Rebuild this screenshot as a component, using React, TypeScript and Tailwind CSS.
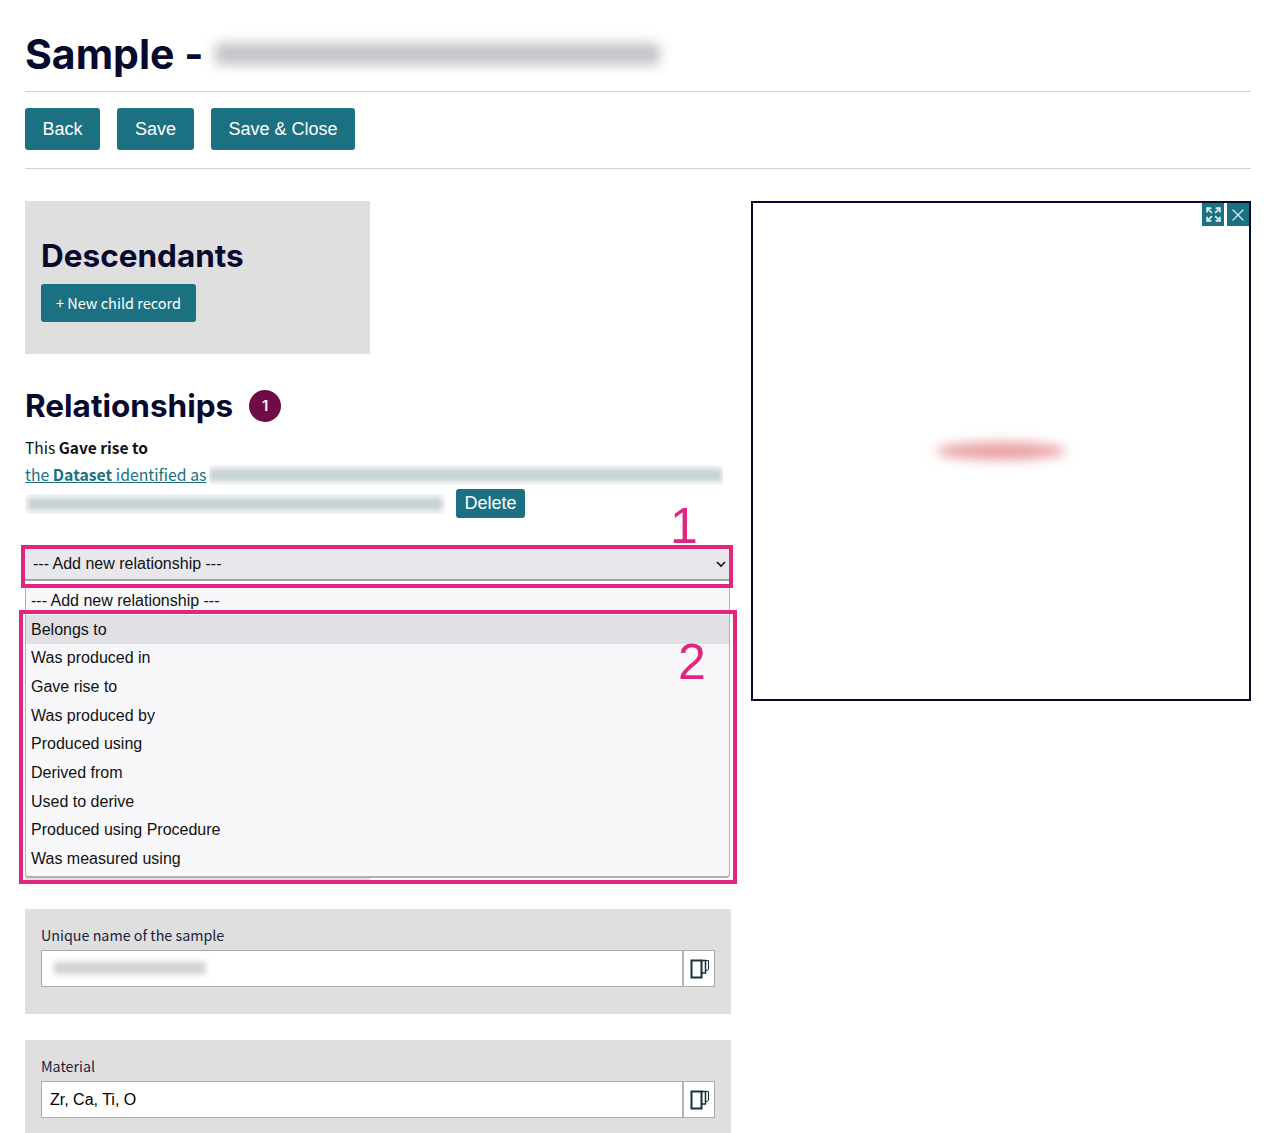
import React from 'react';
import { Expand, X } from 'lucide-react';

const options = [
  'Belongs to',
  'Was produced in',
  'Gave rise to',
  'Was produced by',
  'Produced using',
  'Derived from',
  'Used to derive',
  'Produced using Procedure',
  'Was measured using',
];

const heading = "font-['Inter','Lato',sans-serif] font-bold text-[#070a2e]";
const body = "font-['Noto_Sans_CJK_SC','Noto_Sans',sans-serif]";
const control = "font-['Liberation_Sans',Arial,sans-serif]";
const tealButton = `${control} bg-[#1b7182] text-white rounded-[3px] flex items-center justify-center`;

// ================= Blurred placeholder =================
const Blurred: React.FC<{ className: string; bar: string }> = ({ className, bar }) => (
  <div className={`overflow-hidden bg-white ${className}`}>
    <div className={bar} />
  </div>
);

const CopyIcon = () => (
  <svg className="ml-[2px]" width="20" height="20" viewBox="0 0 20 20" fill="none" stroke="#17303a" strokeWidth="2">
    <rect x="1.5" y="1.5" width="10" height="17" />
    <path d="M11.5 1.5h4v12.5h-4" strokeWidth="1.5" />
    <path d="M15.5 1.5h3v9l-3 1.5" strokeWidth="1" />
  </svg>
);

// ================= Field =================
const Field: React.FC<{ label: string; children: React.ReactNode; className: string }> = ({ label, children, className }) => (
  <div className={`w-[706px] bg-[#dfdfdf] px-4 pt-[17px] ${className}`}>
    <div className={`${body} text-[14.3px] leading-[18px] text-[#1a2340]`}>{label}</div>
    <div className="mt-[6px] flex h-[37px] w-[674px] border border-[#ababab] bg-white">
      <div className={`${control} flex-1 flex items-center relative text-[16px] text-black pl-2`}>{children}</div>
      <div className="w-[32px] border-l-2 border-[#b5b5b5] flex items-center justify-center">
        <CopyIcon />
      </div>
    </div>
  </div>
);

export default function App() {
  return (
    <div className="relative h-[1133px] overflow-hidden bg-white px-[25px]">
      {/* ================= Title ================= */}
      <div className="flex h-[91px] items-start pt-[29px]">
        <h1 className={`${heading} text-[41px] leading-[50px] whitespace-nowrap`}>Sample -</h1>
        <Blurred
          className="relative mt-[1px] h-[47px] w-[470px]"
          bar="absolute left-[12px] top-[13px] h-[22px] w-[445px] rounded-sm bg-[#c4c5c8] blur-[6px]"
        />
      </div>
      <div className="h-px bg-[#d0d0d0]" />

      {/* ================= Toolbar ================= */}
      <div className="mt-4 flex h-[42px] gap-[17px] text-[18px]">
        <button className={`${tealButton} w-[75px]`}>Back</button>
        <button className={`${tealButton} w-[77px]`}>Save</button>
        <button className={`${tealButton} w-[144px]`}>Save &amp; Close</button>
      </div>
      <div className="mt-[18px] h-px bg-[#d0d0d0]" />

      <div className="mt-8 flex items-start justify-between">
        {/* ================= Left column ================= */}
        <div className="relative w-[706px]">
          <div className="h-[153px] w-[345px] bg-[#dfdfdf] pl-4 pt-[35px]">
            <h2 className={`${heading} text-[31.5px] leading-[40px]`}>Descendants</h2>
            <button className={`${tealButton} mt-[8px] h-[38px] w-[155px] pb-[1px] !font-['Noto_Sans_CJK_SC',sans-serif] text-[14.5px]`}>
              + New child record
            </button>
          </div>

          <div className="mt-[36px] flex h-[32px] items-center gap-4">
            <h2 className={`${heading} text-[31.5px] leading-[40px]`}>Relationships</h2>
            <span className="flex h-8 w-8 items-center justify-center rounded-full bg-[#6f0c43] font-['Inter',sans-serif] text-[15px] font-semibold text-white">1</span>
          </div>

          <div className={`${body} mt-[15px] text-[15.5px] leading-[20px] text-[#111]`}>
            This <b className="font-semibold">Gave rise to</b>
          </div>
          <div className={`${body} relative mt-[8px] h-[20px] text-[15.8px] leading-[20px] text-[#1b7182]`}>
            <span className="underline">
              the <b className="font-semibold">Dataset</b> identified as
            </span>
            <Blurred
              className="absolute left-[184px] top-0 h-[20px] w-[514px]"
              bar="mt-[3px] h-[14px] w-full bg-[#c6d2d6] blur-[3px]"
            />
          </div>
          <div className="mt-[2px] flex h-[32px] items-start">
            <Blurred
              className="mt-[7px] h-[20px] w-[420px]"
              bar="mx-[2px] mt-[3px] h-[14px] bg-[#c6d0d4] blur-[3px]"
            />
            <button className={`${tealButton} ml-[11px] mt-[2px] h-[29px] w-[69px] text-[18px]`}>Delete</button>
          </div>

          {/* ================= Native-looking select ================= */}
          <div className={`${control} mt-[28px] flex h-[34px] w-[705px] items-center justify-between border-b-2 border-[#a3a3a3] bg-[#e8e8ec] pl-[8px] pr-[3px] pt-[2px] text-[16px] text-[#111]`}>
            <span>--- Add new relationship ---</span>
            <svg width="12" height="12" viewBox="0 0 12 12" fill="none" stroke="#111" strokeWidth="1.6">
              <path d="M2 4l4 4 4-4" />
            </svg>
          </div>

          {/* Panel mostly hidden by the open list, only its bottom edge peeks out */}
          <div className="mt-[6px] h-[293px] w-[345px] bg-[#dfdfdf]" />

          <Field label="Unique name of the sample" className="mt-[29px] h-[105px]">
            <Blurred
              className="absolute left-[2px] top-[2px] h-[30px] w-[181px]"
              bar="ml-[10px] mt-[9px] h-[12px] w-[152px] bg-[#d0d0d2] blur-[3px]"
            />
          </Field>
          <Field label="Material" className="mt-[26px] h-[105px]">
            Zr, Ca, Ti, O
          </Field>

          {/* ================= Open option list ================= */}
          <div className={`${control} absolute left-0 top-[386px] h-[291px] w-[705px] rounded-b-[4px] border-x border-b-2 border-[#b0b0b0] bg-[#f8f8fb] text-[16px] text-[#111]`}>
            <div className="flex h-[28.3px] items-center pl-[5px]">--- Add new relationship ---</div>
            {options.map((option, i) => (
              <div key={option} className={`flex h-[28.7px] items-center pl-[5px] ${i === 0 ? 'bg-[#e0e0e6]' : ''}`}>
                {option}
              </div>
            ))}
          </div>

          {/* ================= Annotations ================= */}
          <div className="absolute left-[-4px] top-[344px] h-[43px] w-[712px] border-4 border-[#e0267f]" />
          <div className="absolute left-[-6px] top-[409px] h-[274px] w-[718px] border-4 border-[#e0267f]" />
          <span className={`${control} absolute left-[645px] top-[297px] text-[50px] leading-[56px] text-[#e0267f]`}>1</span>
          <span className={`${control} absolute left-[653px] top-[433px] text-[50px] leading-[56px] text-[#e0267f]`}>2</span>
        </div>

        {/* ================= Preview ================= */}
        <div className="relative flex h-[500px] w-[500px] items-center justify-center border-2 border-[#070a2e] bg-white">
          <div className="h-[18px] w-[130px] rounded-[50%] bg-[#e9a0a4] blur-[6px]" />
          <div className="absolute right-0 top-0 flex gap-[3px]">
            <button className="flex h-[23px] w-[22px] items-center justify-center bg-[#1b7182] text-[#d6eef2]">
              <Expand size={17} strokeWidth={2.5} />
            </button>
            <button className="flex h-[23px] w-[22px] items-center justify-center bg-[#1b7182] text-[#d6eef2]">
              <X size={20} strokeWidth={1.5} />
            </button>
          </div>
        </div>
      </div>
    </div>
  );
}
